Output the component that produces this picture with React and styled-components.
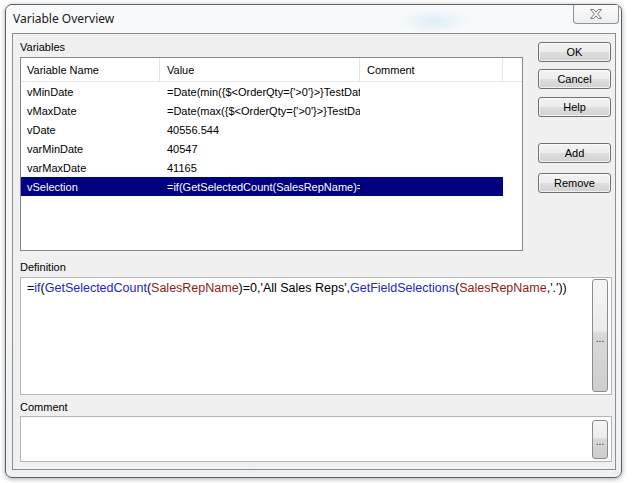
import React from 'react';
import styled, {createGlobalStyle} from 'styled-components';

const GlobalStyle = createGlobalStyle`
  html, body {
    margin: 0;
    padding: 0;
    background: #ffffff;
  }
  body {
    font-family: "Liberation Sans", Arial, sans-serif;
  }
`;

const Desktop = styled.div`
  width: 632px;
  height: 483px;
  box-sizing: border-box;
  padding: 4px 10px 5px 5px;
  background: #ffffff;
  overflow: hidden;
`;

const Window = styled.div`
  height: 100%;
  box-sizing: border-box;
  display: flex;
  flex-direction: column;
  border: 1px solid #5c5f63;
  border-radius: 7px;
  background:
    radial-gradient(ellipse 36px 12px at 428px 16px, rgba(170, 220, 238, 0.35), rgba(170, 220, 238, 0) 100%),
    linear-gradient(#f8f9fa, #eef1f3);
  box-shadow: 0 1px 5px rgba(0, 0, 0, 0.35);
`;

const TitleBar = styled.div`
  height: 28px;
  display: flex;
  align-items: flex-start;
  padding-left: 7px;
`;

const Title = styled.div`
  padding-top: 6px;
  line-height: 15px;
  font-family: "Noto Sans", "Open Sans", sans-serif;
  font-size: 12px;
  color: #1a1a1a;
`;

const CloseButton = styled.div`
  margin-left: auto;
  margin-right: 2px;
  width: 44px;
  height: 18px;
  display: flex;
  align-items: center;
  justify-content: center;
  border: 1px solid #8d9196;
  border-top: none;
  border-radius: 0 0 4px 4px;
  background: linear-gradient(#fbfbfb, #eceef0);
`;

const Client = styled.div`
  flex: 1;
  margin: 0 5px 7px 6px;
  border: 1px solid #8c8e91;
  background: #f0f0f0;
  padding: 0 3px 0 7px;
  display: flex;
  flex-direction: column;
  font-size: 11px;
  color: #000;
`;

const TopArea = styled.div`
  display: flex;
`;

const LeftColumn = styled.div`
  width: 503px;
  padding-top: 6px;
`;

const RightColumn = styled.div`
  margin-left: 15px;
  width: 73px;
  padding-top: 8px;
  display: flex;
  flex-direction: column;
`;

const Label = styled.div`
  line-height: 14px;
  margin-top: ${p => p.$top || 0}px;
  margin-bottom: ${p => p.$bottom || 3}px;
`;

const ListView = styled.div`
  height: 194px;
  box-sizing: border-box;
  border: 1px solid #828790;
  background: #ffffff;
  overflow: hidden;
`;

const Row = styled.div`
  display: flex;
  height: ${p => (p.$header ? 24 : 19)}px;
  align-items: center;
  ${p => p.$header && 'border-bottom: 1px solid #e5e5e5; box-sizing: border-box;'}
`;

const RowBody = styled.div`
  display: flex;
  height: 100%;
  align-items: center;
  background: ${p => (p.$selected ? '#000080' : 'transparent')};
  color: ${p => (p.$selected ? '#ffffff' : '#000000')};
`;

const Cell = styled.div`
  width: ${p => p.$width}px;
  height: 100%;
  box-sizing: border-box;
  display: flex;
  align-items: center;
  padding-left: ${p => p.$pad}px;
  white-space: nowrap;
  overflow: hidden;
  ${p => p.$header && 'border-right: 1px solid #e5e5e5;'}
`;

const Button = styled.div`
  height: 20px;
  box-sizing: border-box;
  margin-top: ${p => p.$gap || 0}px;
  display: flex;
  align-items: center;
  justify-content: center;
  border: 1px solid #707070;
  border-radius: 3px;
  background: linear-gradient(#f4f4f4 0%, #ececec 48%, #dedede 52%, #d2d2d2 100%);
  box-shadow: inset 0 0 0 1px rgba(255, 255, 255, 0.7);
  font-size: 11px;
  color: #000;
`;

const TextBox = styled.div`
  height: ${p => p.$height}px;
  box-sizing: border-box;
  display: flex;
  border: 1px solid #b4b6b9;
  background: #ffffff;
`;

const TextArea = styled.div`
  flex: 1;
  padding: 3px 0 0 6px;
  font-size: 12.5px;
  line-height: 15px;
  white-space: nowrap;
  overflow: hidden;
`;

const DotsButton = styled.div`
  width: 16px;
  margin: ${p => p.$margin};
  box-sizing: border-box;
  border: 1px solid #8a8c8f;
  border-radius: 3px;
  background: linear-gradient(#f6f6f6 0%, #ebebeb 46%, #d9d9d9 48%, #cdcdcd 100%);
  display: flex;
  align-items: center;
  justify-content: center;
  padding-top: ${p => p.$pt || 0}px;
  font-size: 10px;
  line-height: 10px;
  color: #222;
`;

const Token = styled.span`
  color: ${p => (p.$kind === 'fn' ? '#2424c8' : p.$kind === 'field' ? '#8c1c1c' : '#000000')};
`;

const columns = [
    {title: 'Variable Name', width: 139, pad: 6},
    {title: 'Value', width: 200, pad: 7},
    {title: 'Comment', width: 143, pad: 7},
];

const variables = [
    ['vMinDate', "=Date(min({$<OrderQty={'>0'}>}TestDate))", ''],
    ['vMaxDate', "=Date(max({$<OrderQty={'>0'}>}TestDate))", ''],
    ['vDate', '40556.544', ''],
    ['varMinDate', '40547', ''],
    ['varMaxDate', '41165', ''],
    ['vSelection', "=if(GetSelectedCount(SalesRepName)=0,'All Sales Reps',GetFieldSelections(SalesRepName,'.'))", ''],
];

const definition = [
    ['', '='], ['fn', 'if'], ['', '('], ['fn', 'GetSelectedCount'], ['', '('],
    ['field', 'SalesRepName'], ['', ")=0,'All Sales Reps',"], ['fn', 'GetFieldSelections'],
    ['', '('], ['field', 'SalesRepName'], ['', ",'.'))"],
];

const CloseGlyph = () => (
    <svg width="14" height="12" viewBox="0 0 14 12">
        <path d="M1.5 1.5h3.2l2.3 2.6 2.3-2.6h3.2l-3.8 4.5 3.8 4.5h-3.2l-2.3-2.6-2.3 2.6h-3.2l3.8-4.5z"
              fill="#f4f4f4" stroke="#7b7f84" strokeWidth="1" strokeLinejoin="round"/>
    </svg>
);

const App = () => {
    return (
        <Desktop>
            <GlobalStyle/>
            <Window>
                <TitleBar>
                    <Title>Variable Overview</Title>
                    <CloseButton><CloseGlyph/></CloseButton>
                </TitleBar>
                <Client>
                    <TopArea>
                        <LeftColumn>
                            <Label>Variables</Label>
                            <ListView>
                                <Row $header>
                                    {columns.map(c => (
                                        <Cell key={c.title} $header $width={c.width} $pad={c.pad}>{c.title}</Cell>
                                    ))}
                                </Row>
                                {variables.map((v, i) => (
                                    <Row key={v[0]}>
                                        <RowBody $selected={i === variables.length - 1}>
                                            {columns.map((c, j) => (
                                                <Cell key={c.title} $width={c.width} $pad={c.pad}>{v[j]}</Cell>
                                            ))}
                                        </RowBody>
                                    </Row>
                                ))}
                            </ListView>
                        </LeftColumn>
                        <RightColumn>
                            <Button>OK</Button>
                            <Button $gap={7}>Cancel</Button>
                            <Button $gap={8}>Help</Button>
                            <Button $gap={26}>Add</Button>
                            <Button $gap={10}>Remove</Button>
                        </RightColumn>
                    </TopArea>
                    <Label $top={9}>Definition</Label>
                    <TextBox $height={118}>
                        <TextArea>
                            {definition.map(([kind, text], i) => (
                                <Token key={i} $kind={kind}>{text}</Token>
                            ))}
                        </TextArea>
                        <DotsButton $margin="1px 3px 2px 0" $pt={6}>...</DotsButton>
                    </TextBox>
                    <Label $top={5} $bottom={2}>Comment</Label>
                    <TextBox $height={46}>
                        <TextArea/>
                        <DotsButton $margin="3px 3px 2px 0" $pt={4}>...</DotsButton>
                    </TextBox>
                </Client>
            </Window>
        </Desktop>
    );
};

export default App;
